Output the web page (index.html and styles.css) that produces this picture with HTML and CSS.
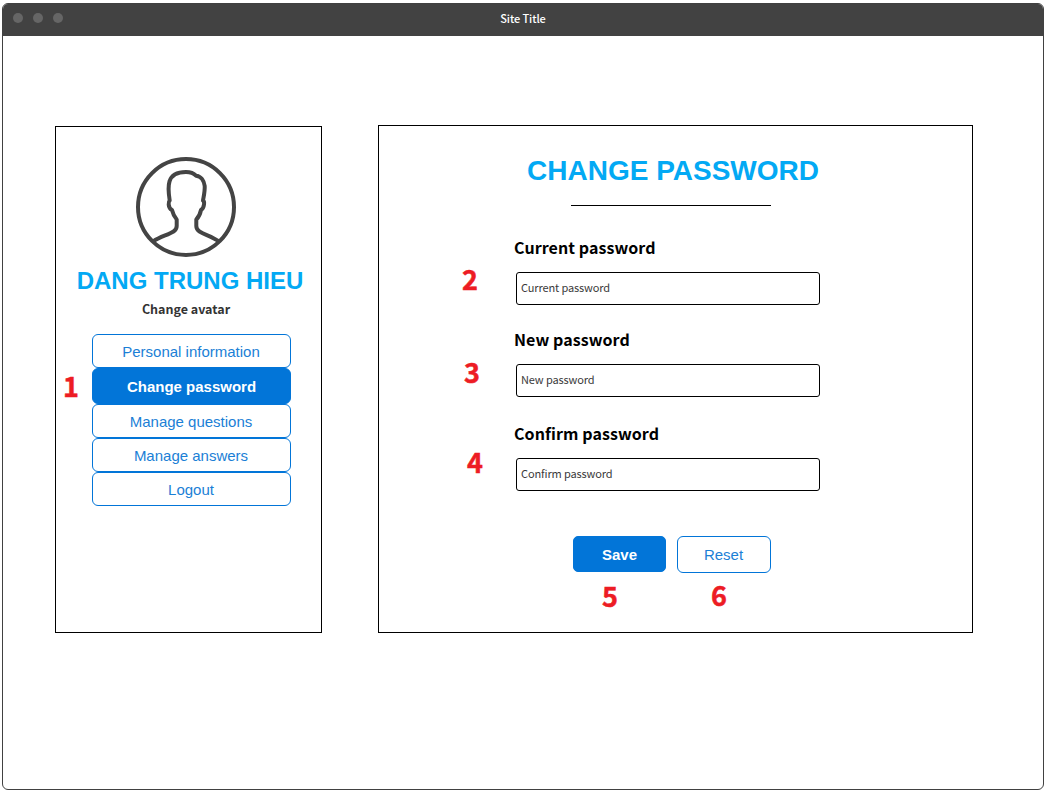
FILE: index.html
```html
<!DOCTYPE html>
<html lang="en">
<head>
<meta charset="utf-8">
<title>Site Title</title>
<link rel="stylesheet" href="styles.css">
</head>
<body>
<div class="window">
  <header class="titlebar">
    <div class="dots"><i class="dot"></i><i class="dot"></i><i class="dot"></i></div>
    <span class="site-title">Site Title</span>
  </header>
  <main class="content">
    <aside class="sidebar">
      <svg class="avatar" viewBox="0 0 100 100" fill="none" stroke="#444" stroke-width="4">
        <circle cx="50" cy="50" r="48"/>
        <path stroke-linejoin="round" d="M17.5 84.2C24 79.500 32 78 37.500 74.500Q40.700 72.500 40.700 69V62.500Q37.500 59 36 53Q33 51.500 32.700 47.500Q32.500 44.500 33.700 43.500C32.500 36 32 29 33.500 24.500C35.500 17.500 42 15 50 15C54 15 57.500 16 60 18.700C65 19 68 24 68.700 29C69 34 67.800 39 67 43.500Q68.500 44.500 68 47.500Q67.500 51.500 65 53Q63.800 59 60.300 62.500V69Q60.300 72.500 63.500 74.500C69 78 76 79.500 82.500 84.200"/>
      </svg>
      <h2 class="user-name">DANG TRUNG HIEU</h2>
      <a class="change-avatar">Change avatar</a>
      <nav class="menu">
        <a class="menu-item">Personal information</a>
        <a class="menu-item active">Change password<b class="mark mark-1">1</b></a>
        <a class="menu-item">Manage questions</a>
        <a class="menu-item">Manage answers</a>
        <a class="menu-item">Logout</a>
      </nav>
    </aside>
    <section class="panel">
      <h1 class="heading">CHANGE PASSWORD</h1>
      <div class="rule"></div>
      <form class="form">
        <div class="field"><label class="label" for="current">Current password</label><input class="input" id="current" placeholder="Current password"><b class="mark mark-2">2</b></div>
        <div class="field"><label class="label" for="new">New password</label><input class="input" id="new" placeholder="New password"><b class="mark mark-3">3</b></div>
        <div class="field field-confirm"><label class="label" for="confirm">Confirm password</label><input class="input" id="confirm" placeholder="Confirm password"><b class="mark mark-4">4</b></div>
        <div class="actions">
          <button type="button" class="button save">Save<b class="mark mark-5">5</b></button>
          <button type="button" class="button reset">Reset<b class="mark mark-6">6</b></button>
        </div>
      </form>
    </section>
  </main>
</div>
</body>
</html>
```

FILE: styles.css
```css
* { box-sizing: border-box; }
body {
  margin: 0;
  padding: 3px 0 0 2px;
  background: #fff;
  font-family: "Liberation Sans", Arial, sans-serif;
}
.window {
  width: 1042px;
  height: 787px;
  border: 1px solid #414141;
  border-radius: 6px;
  overflow: hidden;
}
.titlebar {
  display: grid;
  grid-template-columns: 1fr auto 1fr;
  align-items: center;
  height: 32px;
  padding-bottom: 4px;
  background: #424242;
}
.dots { display: flex; gap: 10px; padding-left: 10.4px; }
.dot { width: 10px; height: 10px; border-radius: 50%; background: #666; }
.site-title {
  color: #fff;
  font: 500 11px/16px "Noto Sans CJK SC", sans-serif;
  letter-spacing: -0.1px;
}
.content {
  display: flex;
  align-items: flex-start;
  gap: 56px;
  padding: 89px 0 0 52px;
}
.sidebar {
  display: flex;
  flex-direction: column;
  width: 267px;
  height: 507px;
  margin-top: 1px;
  padding-top: 30px;
  border: 1px solid #000;
}
.avatar { width: 100px; height: 100px; margin-left: 80px; }
.user-name {
  width: 268px;
  margin: 8px 0 0;
  color: #03a9f4;
  font-size: 24px;
  line-height: 32px;
  text-align: center;
  white-space: nowrap;
}
.change-avatar {
  margin-top: 2px;
  padding-right: 5px;
  color: #333;
  font: 700 12.5px/20px "Noto Sans CJK SC", sans-serif;
  text-align: center;
}
.menu { width: 199px; margin: 15px 0 0 36px; }
.menu-item {
  position: relative;
  display: block;
  height: 34px;
  padding-right: 1px;
  border: 1px solid #0275d8;
  border-radius: 6px;
  color: #1b7fd6;
  font-size: 15px;
  line-height: 34px;
  text-align: center;
}
.active {
  height: 36px;
  padding-right: 0;
  background: #0275d8;
  color: #fff;
  font-weight: 700;
  line-height: 36px;
}
.panel {
  width: 595px;
  height: 508px;
  padding-top: 27px;
  border: 1px solid #000;
}
.heading {
  width: 588px;
  margin: 0;
  color: #03a9f4;
  font-size: 28px;
  line-height: 36px;
  text-align: center;
}
.rule { width: 200px; height: 1px; margin: 16px 0 0 192px; background: #000; }
.form { width: 304px; margin: 28px 0 0 137px; }
.field { position: relative; height: 92px; padding-top: 1px; }
.field-confirm { padding-top: 3px; height: 94px; }
.label {
  display: block;
  height: 24px;
  margin: 0 0 13px -2px;
  font: 700 16px/24px "Noto Sans CJK SC", sans-serif;
  letter-spacing: 0.08px;
}
.input {
  display: block;
  width: 304px;
  height: 33px;
  padding: 0 4px 3px;
  border: 1px solid #000;
  border-radius: 3px;
  background: #fff;
  font: 400 11px/20px "Noto Sans CJK SC", sans-serif;
  letter-spacing: -0.12px;
}
.input::placeholder { color: #3a3a3a; opacity: 1; }
.actions { display: flex; align-items: flex-start; gap: 11px; padding: 24px 0 0 57px; }
.button {
  position: relative;
  padding: 0;
  border: 1px solid #0275d8;
  border-radius: 5px;
  font: 15px/36px "Liberation Sans", Arial, sans-serif;
}
.save { width: 93px; height: 36px; background: #0275d8; color: #fff; font-weight: 700; }
.reset { width: 94px; height: 37px; padding-right: 1px; background: #fff; color: #1b7fd6; border-radius: 6px; }
.mark {
  position: absolute;
  color: #ed1c24;
  font: 700 27px/28px "Noto Sans CJK SC", sans-serif;
  -webkit-text-stroke: 0.5px #ed1c24;
}
.mark-1 { left: -30px; top: 3px; }
.mark-2 { left: -54px; top: 31px; }
.mark-3 { left: -52px; top: 32px; }
.mark-4 { left: -49px; top: 30px; }
.mark-5 { left: 28px; top: 45px; }
.mark-6 { left: 33px; top: 44px; }
```
